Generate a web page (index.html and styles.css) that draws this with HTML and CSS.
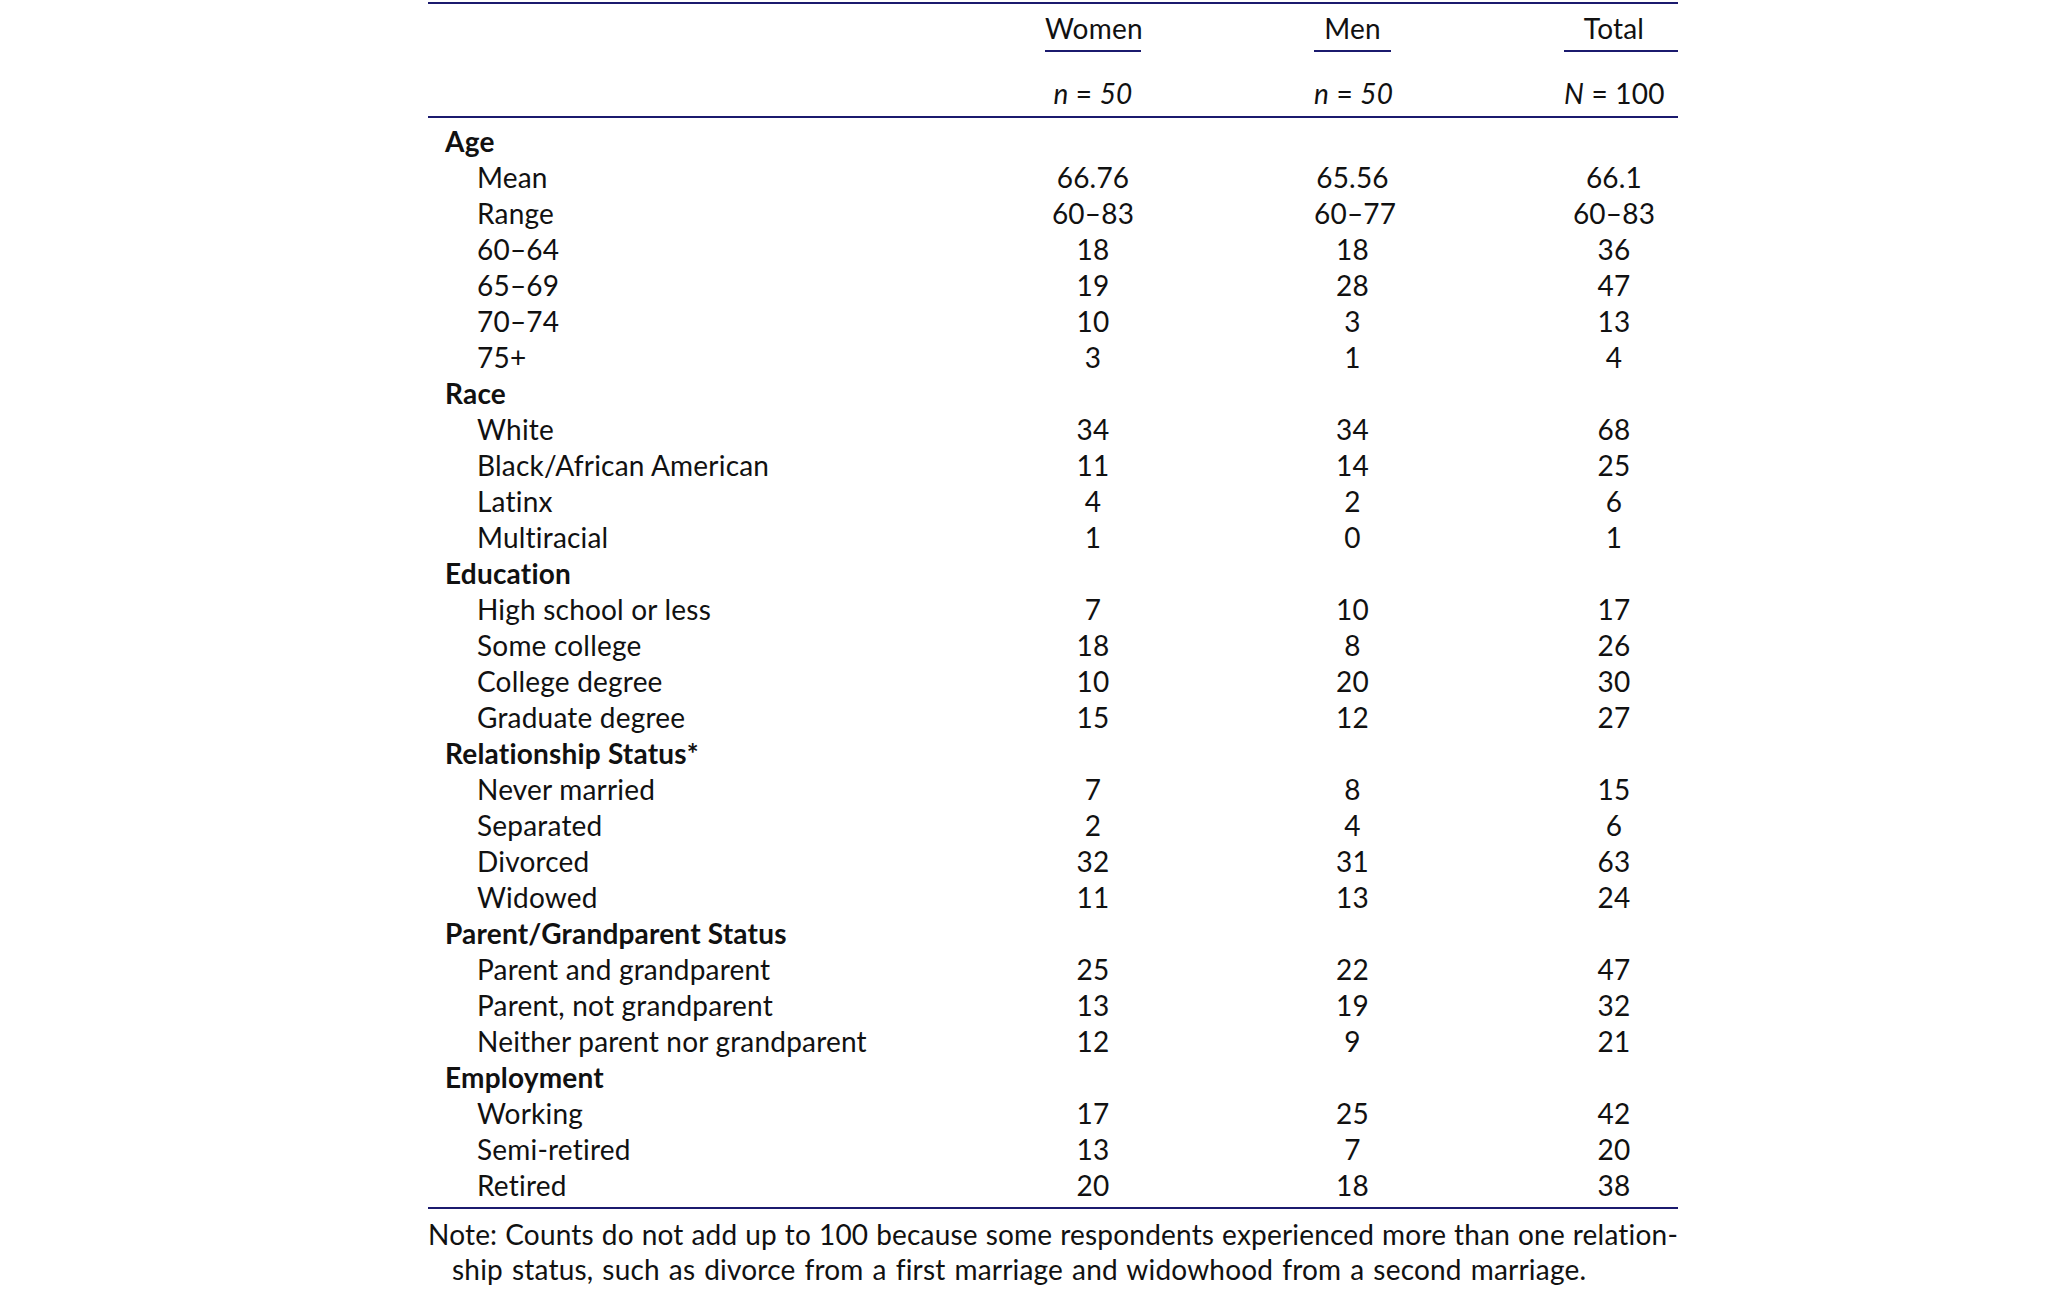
FILE: index.html
```html
<!DOCTYPE html>
<html lang="en">
<head>
<meta charset="utf-8">
<title>Sample characteristics</title>
<link rel="stylesheet" href="styles.css">
</head>
<body>
<div class="page">
  <div class="table">
    <div class="head">
      <div class="row head-row1">
        <div class="cell label"></div>
        <div class="cell num"><span class="hd">Women</span></div>
        <div class="cell num"><span class="hd">Men</span></div>
        <div class="cell num total"><span class="hd">Total</span></div>
      </div>
      <div class="row head-row2">
        <div class="cell label"></div>
        <div class="cell num"><i>n</i> = <i>50</i></div>
        <div class="cell num"><i>n</i> = <i>50</i></div>
        <div class="cell num total"><i>N</i> = 100</div>
      </div>
    </div>
    <div class="body">
      <div class="row"><div class="cell label cat">Age</div><div class="cell num"></div><div class="cell num"></div><div class="cell num total"></div></div>
      <div class="row"><div class="cell label sub">Mean</div><div class="cell num">66.76</div><div class="cell num">65.56</div><div class="cell num total">66.1</div></div>
      <div class="row"><div class="cell label sub">Range</div><div class="cell num">60–83</div><div class="cell num">60–77</div><div class="cell num total">60–83</div></div>
      <div class="row"><div class="cell label sub">60–64</div><div class="cell num">18</div><div class="cell num">18</div><div class="cell num total">36</div></div>
      <div class="row"><div class="cell label sub">65–69</div><div class="cell num">19</div><div class="cell num">28</div><div class="cell num total">47</div></div>
      <div class="row"><div class="cell label sub">70–74</div><div class="cell num">10</div><div class="cell num">3</div><div class="cell num total">13</div></div>
      <div class="row"><div class="cell label sub">75+</div><div class="cell num">3</div><div class="cell num">1</div><div class="cell num total">4</div></div>
      <div class="row"><div class="cell label cat">Race</div><div class="cell num"></div><div class="cell num"></div><div class="cell num total"></div></div>
      <div class="row"><div class="cell label sub">White</div><div class="cell num">34</div><div class="cell num">34</div><div class="cell num total">68</div></div>
      <div class="row"><div class="cell label sub">Black/African American</div><div class="cell num">11</div><div class="cell num">14</div><div class="cell num total">25</div></div>
      <div class="row"><div class="cell label sub">Latinx</div><div class="cell num">4</div><div class="cell num">2</div><div class="cell num total">6</div></div>
      <div class="row"><div class="cell label sub">Multiracial</div><div class="cell num">1</div><div class="cell num">0</div><div class="cell num total">1</div></div>
      <div class="row"><div class="cell label cat">Education</div><div class="cell num"></div><div class="cell num"></div><div class="cell num total"></div></div>
      <div class="row"><div class="cell label sub">High school or less</div><div class="cell num">7</div><div class="cell num">10</div><div class="cell num total">17</div></div>
      <div class="row"><div class="cell label sub">Some college</div><div class="cell num">18</div><div class="cell num">8</div><div class="cell num total">26</div></div>
      <div class="row"><div class="cell label sub">College degree</div><div class="cell num">10</div><div class="cell num">20</div><div class="cell num total">30</div></div>
      <div class="row"><div class="cell label sub">Graduate degree</div><div class="cell num">15</div><div class="cell num">12</div><div class="cell num total">27</div></div>
      <div class="row"><div class="cell label cat">Relationship Status*</div><div class="cell num"></div><div class="cell num"></div><div class="cell num total"></div></div>
      <div class="row"><div class="cell label sub">Never married</div><div class="cell num">7</div><div class="cell num">8</div><div class="cell num total">15</div></div>
      <div class="row"><div class="cell label sub">Separated</div><div class="cell num">2</div><div class="cell num">4</div><div class="cell num total">6</div></div>
      <div class="row"><div class="cell label sub">Divorced</div><div class="cell num">32</div><div class="cell num">31</div><div class="cell num total">63</div></div>
      <div class="row"><div class="cell label sub">Widowed</div><div class="cell num">11</div><div class="cell num">13</div><div class="cell num total">24</div></div>
      <div class="row"><div class="cell label cat">Parent/Grandparent Status</div><div class="cell num"></div><div class="cell num"></div><div class="cell num total"></div></div>
      <div class="row"><div class="cell label sub">Parent and grandparent</div><div class="cell num">25</div><div class="cell num">22</div><div class="cell num total">47</div></div>
      <div class="row"><div class="cell label sub">Parent, not grandparent</div><div class="cell num">13</div><div class="cell num">19</div><div class="cell num total">32</div></div>
      <div class="row"><div class="cell label sub">Neither parent nor grandparent</div><div class="cell num">12</div><div class="cell num">9</div><div class="cell num total">21</div></div>
      <div class="row"><div class="cell label cat">Employment</div><div class="cell num"></div><div class="cell num"></div><div class="cell num total"></div></div>
      <div class="row"><div class="cell label sub">Working</div><div class="cell num">17</div><div class="cell num">25</div><div class="cell num total">42</div></div>
      <div class="row"><div class="cell label sub">Semi-retired</div><div class="cell num">13</div><div class="cell num">7</div><div class="cell num total">20</div></div>
      <div class="row"><div class="cell label sub">Retired</div><div class="cell num">20</div><div class="cell num">18</div><div class="cell num total">38</div></div>
    </div>
  </div>
  <div class="note">
    <span class="note-line1">Note: Counts do not add up to 100 because some respondents experienced more than one relation-</span>
    <span class="note-line2">ship status, such as divorce from a first marriage and widowhood from a second marriage.</span>
  </div>
</div>
</body>
</html>
```
FILE: styles.css
```css
html, body {
  margin: 0;
  padding: 0;
  background: #ffffff;
}

body {
  font-family: "Lato", "Liberation Sans", sans-serif;
  font-size: 28px;
  letter-spacing: 0.2px;
  line-height: 36px;
  color: #111111;
}

.page {
  width: 1250px;
  margin-left: 428px;
  padding-top: 2px;
}

.table {
  border-top: 2px solid #1b1a6e;
  border-bottom: 2px solid #1b1a6e;
}

.head {
  border-bottom: 2px solid #1b1a6e;
}

.row {
  display: grid;
  grid-template-columns: 444px 96px 77px 114px;
  column-gap: 173px;
  height: 36px;
}

.head-row1 {
  height: auto;
  padding-top: 6px;
}

.head-row1 .num {
  padding-bottom: 4px;
  border-bottom: 2px solid #1b1a6e;
}

.head-row2 {
  height: auto;
  padding-top: 23px;
  padding-bottom: 5px;
}

.body {
  padding-top: 5px;
  padding-bottom: 4px;
}

.cell {
  white-space: nowrap;
}

.num {
  text-align: center;
}

.num.total {
  padding-right: 14px;
}

.num i {
  font-style: italic;
}

.cat {
  font-weight: 700;
  padding-left: 17px;
}

.sub {
  padding-left: 49px;
}

.note {
  padding-top: 8px;
  line-height: 35px;
}

.note-line1 {
  display: block;
  white-space: nowrap;
  text-align: justify;
  text-align-last: justify;
}

.note-line2 {
  display: block;
  padding-left: 24px;
  white-space: nowrap;
  word-spacing: 1.6px;
}
```
